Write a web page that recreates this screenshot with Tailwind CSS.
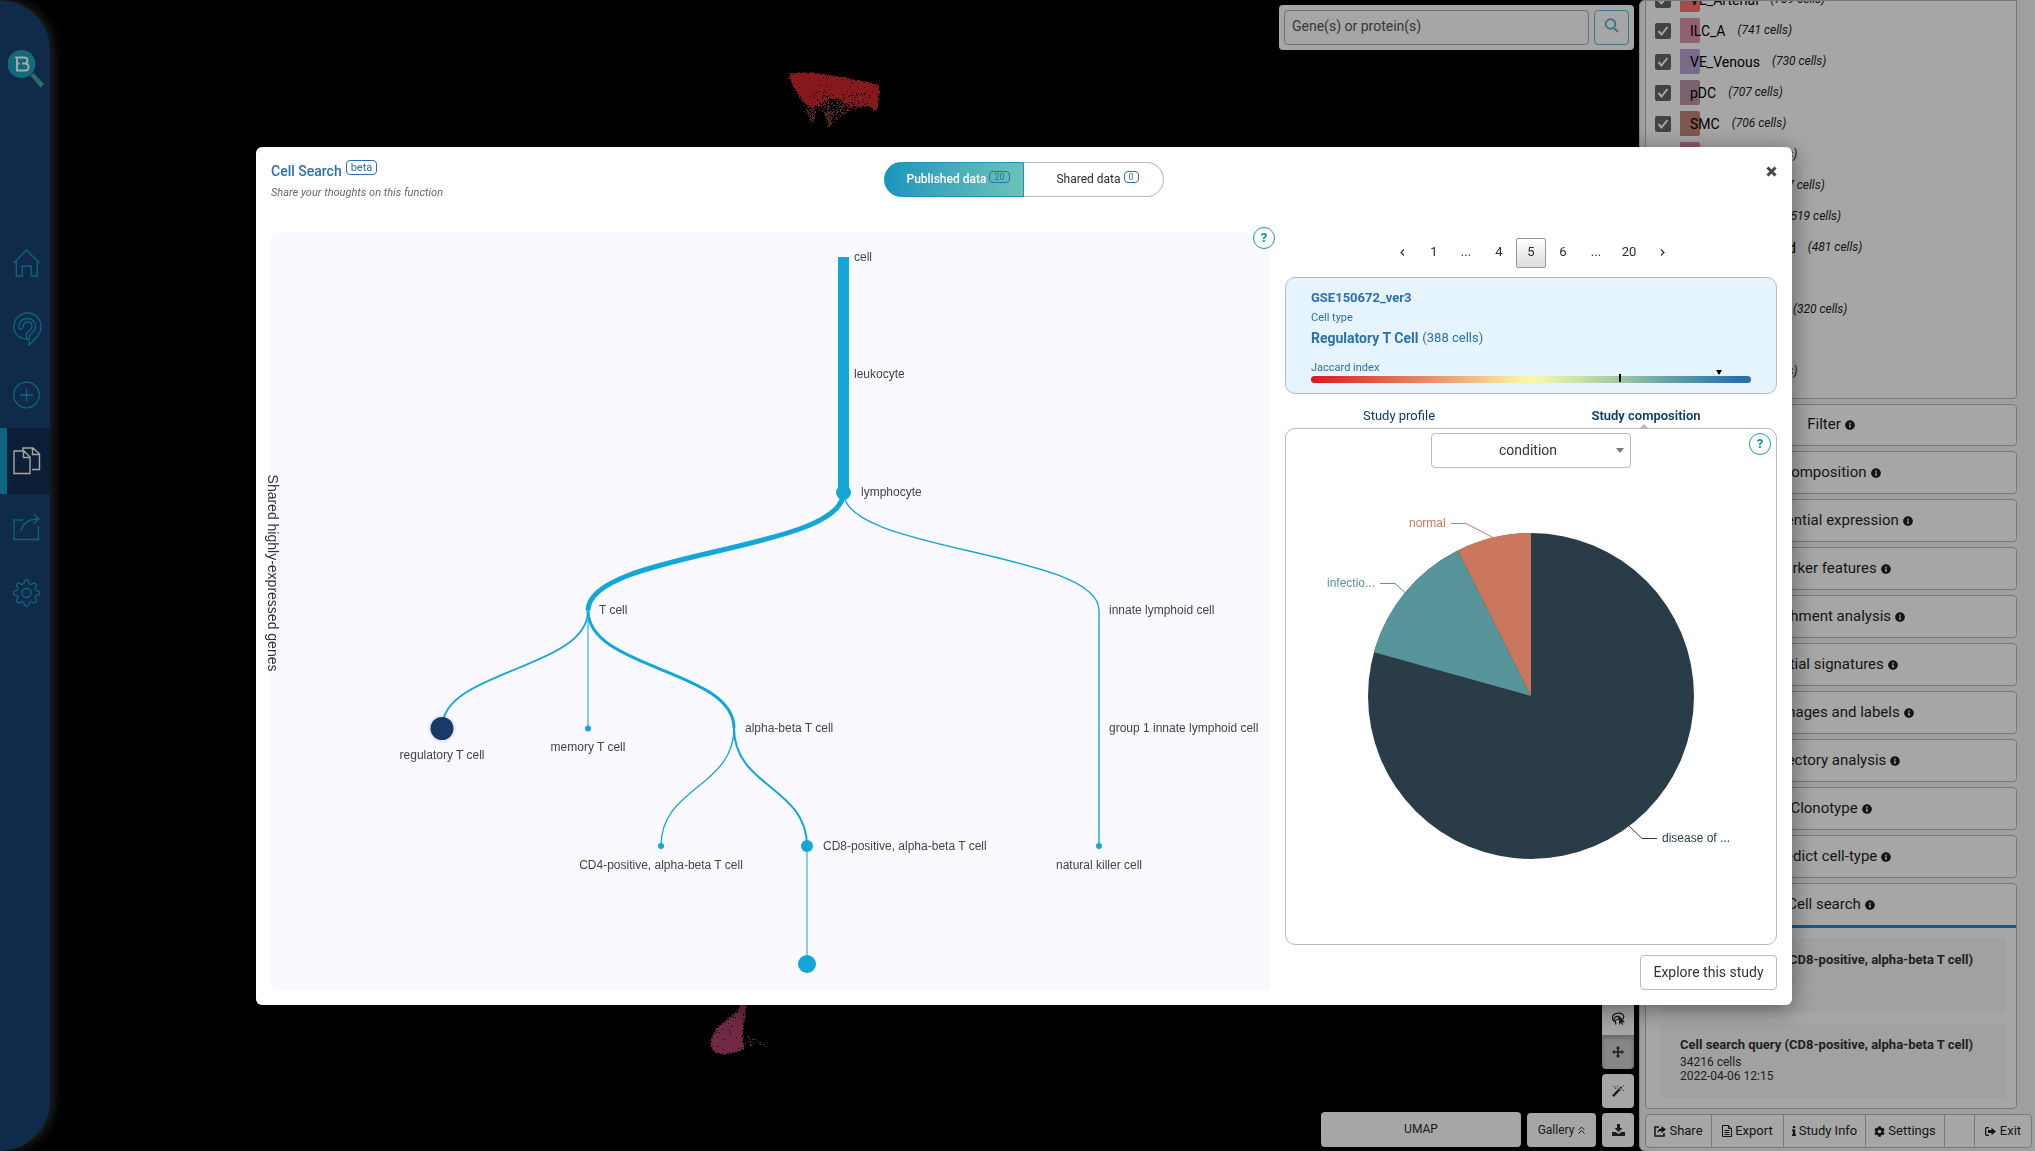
<!DOCTYPE html>
<html lang="en">
<head>
<meta charset="utf-8">
<title>Cell Search</title>
<script src="https://cdn.jsdelivr.net/npm/@tailwindcss/browser@4"></script>
</head>
<body class="h-screen overflow-hidden bg-black font-[Roboto,sans-serif] text-sm text-[#2b2b2b]">

<svg class="hidden">
  <defs>
    <symbol id="info" viewBox="0 0 512 512"><path fill="currentColor" d="M256 8C119.043 8 8 119.083 8 256c0 136.997 111.043 248 248 248s248-111.003 248-248C504 119.083 392.957 8 256 8zm0 110c23.196 0 42 18.804 42 42s-18.804 42-42 42-42-18.804-42-42 18.804-42 42-42zm56 254c0 6.627-5.373 12-12 12h-88c-6.627 0-12-5.373-12-12v-24c0-6.627 5.373-12 12-12h12v-64h-12c-6.627 0-12-5.373-12-12v-24c0-6.627 5.373-12 12-12h64c6.627 0 12 5.373 12 12v100h12c6.627 0 12 5.373 12 12v24z"/></symbol>
    <path id="tooth" d="M-3.6-8.8C-2-9-2.6-10-2.2-11.5Q-1.8-13 0-13Q1.8-13 2.2-11.5C2.6-10 2-9 3.6-8.8"/>
  </defs>
</svg>

<div class="flex h-full">
  <nav class="z-10 flex w-[50px] shrink-0 flex-col rounded-r-[50px] bg-[#1a4170] text-[#149bc4] shadow-[4px_0_12px_rgba(255,255,255,0.2)]">
    <a href="#" aria-label="BioTuring" class="mt-12 block h-[182px] pl-2">
      <svg class="h-10 w-9" viewBox="0 0 36 40" fill="none">
        <path d="M22.500 27.500l3-2.500 10.500 11-3.500 3.500z" fill="#43a8a5"/>
        <circle cx="13.500" cy="16" r="14" fill="#1ba2c1"/>
        <path d="M7 9.500h9.500q3 0 3 3t-3 3H14M9 9v13.500h8q3.500 0 3.500-3.500t-3.500-3.500M8 15.500h3.500" stroke="#fff" stroke-width="2"/>
      </svg>
    </a>
    <a href="#" aria-label="Home" class="flex h-[66px] items-center pl-[13px]">
      <svg class="size-7" viewBox="0 0 28 28" fill="none" stroke="currentColor" stroke-width="1.300"><path d="M.8 14L13.500 1 26.500 14M3.300 12v15h6V17h9v10h6V12"/></svg>
    </a>
    <a href="#" aria-label="Help" class="flex h-[66px] items-center pl-[13px]">
      <svg class="h-[34px] w-[29px]" viewBox="0 0 29 34" fill="none" stroke="currentColor" stroke-width="1.300"><path d="M16 33v-6C7 28 1 22 .8 15 .8 7 7 1 14.500 1 22 1 28 7 28 14.500c0 6-3 10-12 18.500z"/><path d="M6 16c-1-5 3-9.500 8-9.500s8.500 3.500 8.500 8-3 6-5 7.500L16 27h-2.500v-5.500c.5-2.500 5.500-3 5.500-7 0-3-2-4.500-4.500-4.500S10.500 12 10 15c-.5 3-3.500 3-4 1z"/></svg>
    </a>
    <a href="#" aria-label="New" class="flex h-[66px] items-center pl-[13px]">
      <svg class="size-7" viewBox="0 0 28 28" fill="none" stroke="currentColor" stroke-width="1.300"><circle cx="13.500" cy="14" r="12.800"/><path d="M7 14h13M13.500 7.500v13"/></svg>
    </a>
    <a href="#" aria-label="Studies" class="flex h-[66px] items-center border-l-[7px] border-[#149bc4] bg-[#143056] pl-[6px] text-white">
      <svg class="size-7" viewBox="0 0 28 28" fill="none" stroke="currentColor" stroke-width="1.400"><path d="M1 4h10l6 6v16.500H1zM10.500 4v6.500H17M10 4V1h10l6.500 6v15.500H19M19.500 1v6.500H26"/></svg>
    </a>
    <a href="#" aria-label="Share" class="flex h-[66px] items-center pl-[13px]">
      <svg class="size-7" viewBox="0 0 28 28" fill="none" stroke="currentColor" stroke-width="1.300"><path d="M10 7H1v19.500h24.500V13M8 18C10 10 16 6 25.500 6M20.500 1l5.500 5-5.500 5"/></svg>
    </a>
    <a href="#" aria-label="Settings" class="flex h-[66px] items-center pl-[13px]">
      <svg class="size-7" viewBox="-13.500 -14 28 28" fill="none" stroke="currentColor" stroke-width="1.300"><use href="#tooth"/><use href="#tooth" transform="rotate(45)"/><use href="#tooth" transform="rotate(90)"/><use href="#tooth" transform="rotate(135)"/><use href="#tooth" transform="rotate(180)"/><use href="#tooth" transform="rotate(225)"/><use href="#tooth" transform="rotate(270)"/><use href="#tooth" transform="rotate(315)"/><circle r="4.500"/></svg>
    </a>
  </nav>

  <main class="relative flex flex-1 flex-col items-end justify-between bg-black pt-[5px] pr-[5px] pb-1">
    <canvas id="clusterA" width="110" height="75" class="absolute top-[60px] left-[730px]"></canvas>
    <canvas id="clusterB" width="100" height="70" class="absolute bottom-[85px] left-[650px]"></canvas>
    <form class="flex gap-[5px] rounded-sm bg-white p-[5px]">
      <input aria-label="Gene(s) or protein(s)" placeholder="Gene(s) or protein(s)" class="h-[35px] w-[305px] rounded border border-[#aaa] bg-white px-[7px] pb-1 placeholder:text-[#555]">
      <button type="button" aria-label="Search" class="flex h-[35px] w-[35px] items-center justify-center rounded border border-[#5cb5d3] pb-1">
        <svg class="size-[15px]" viewBox="0 0 15 15" fill="none" stroke="#5cb5d3" stroke-width="2"><circle cx="6.500" cy="6" r="4.800"/><path d="M10 10l4 4"/></svg>
      </button>
    </form>
    <div class="flex items-end gap-1.5">
      <button class="h-[35px] w-[200px] rounded-sm bg-white pb-0.5 text-xs">UMAP</button>
      <button class="flex h-[34px] w-[69px] items-center justify-center gap-1 rounded-sm bg-white text-xs">Gallery
        <svg class="h-2 w-[7px]" viewBox="0 0 7 8" fill="none" stroke="currentColor"><path d="M.5 4l3-3 3 3M.5 7.500l3-3 3 3"/></svg>
      </button>
      <div class="flex w-8 flex-col gap-[5px]">
        <div class="flex flex-col">
          <button aria-label="Lasso" class="flex h-[34px] items-center justify-center rounded-t-sm bg-white">
            <svg class="size-[13px]" viewBox="0 0 13 13" fill="none" stroke="currentColor" stroke-width="1.300"><path d="M3 9.500C-.5 8.500 0 4 2 2.500 4.500.5 10 .5 11.500 3.500c.5 1.500 0 3-1 4M2.500 8.500C1.500 6 4 4 6 4.500s1 2.500-.5 3S3 9 3 9.500l1 3"/><path d="M7 3.500v9.500l2-2.500 1 2.500 1.200-.5-1-2.300H13z" fill="currentColor" stroke="none"/></svg>
          </button>
          <button aria-label="Move" class="flex h-[34px] items-center justify-center rounded-b-sm bg-[#d0d0d0] shadow-[inset_0_3px_5px_rgba(0,0,0,0.25)]">
            <svg class="size-3" viewBox="0 0 12 12" fill="currentColor"><path d="M6 0l2.300 2.500H6.800v2.700h2.700V3.700L12 6 9.500 8.300V6.800H6.800v2.700h1.500L6 12 3.700 9.500h1.500V6.800H2.500v1.500L0 6l2.500-2.300v1.500h2.700V2.500H3.700z"/></svg>
          </button>
        </div>
        <button aria-label="Magic wand" class="flex h-[34px] items-center justify-center rounded-sm bg-white">
          <svg class="size-3" viewBox="0 0 12 12" fill="currentColor"><path d="M0 10.500L8.500 1.500 10.500 3 1.800 12zM1.500 1h1v1h-1zM5 .5h1v1H5zM3 2.500h1.300v1.300H3zM10.800 5h1v1h-1zM10.500.5h1v1h-1z"/><path d="M7.200 4.300L8.700 2.700l.8.600L8 5z" fill="#fff"/></svg>
        </button>
        <button aria-label="Download" class="flex h-[34px] items-center justify-center rounded-sm bg-white">
          <svg class="h-3 w-[13px]" viewBox="0 0 13 12" fill="currentColor"><path d="M5 0h3v4h2.500l-4 4-4-4H5zM0 8h3.500l3 2 3-2H13v4H0z"/></svg>
        </button>
      </div>
    </div>
  </main>

  <aside class="flex w-[396px] shrink-0 flex-col rounded-l-md border-l border-[#ccc] bg-[#f5f5f5] pb-[3px] text-[#1f1f1f]">
    <div class="flex min-h-0 flex-1 flex-col gap-[5px] pr-[18px] pl-[5px]">
      <ul id="groups" class="flex h-[399px] shrink-0 flex-col justify-end overflow-hidden rounded-b border border-[#bbb] bg-white pb-[11px] pl-[9px]"></ul>
      <div id="tools" class="flex flex-col gap-[5px]"></div>
      <section class="flex min-h-0 flex-1 flex-col rounded border border-[#bbb] bg-white">
        <button class="flex h-11 shrink-0 items-center justify-center gap-1 border-b-[3px] border-[#0f95bc] text-[15px]">Cell search
          <svg class="size-2.5"><use href="#info"/></svg>
        </button>
        <div class="flex flex-col gap-2.5 pt-2.5 pr-2.5 pl-[14px] text-[#333]">
          <div class="h-[75px] bg-[#f7f7f7] pt-3 pl-5 text-xs leading-[14px]">
            <h3 class="text-[13px] leading-5 font-bold">Cell search query (CD8-positive, alpha-beta T cell)</h3>
            <p>34216 cells</p><p>2022-04-06 12:18</p>
          </div>
          <div class="h-[75px] bg-[#f7f7f7] pt-3 pl-5 text-xs leading-[14px]">
            <h3 class="text-[13px] leading-5 font-bold">Cell search query (CD8-positive, alpha-beta T cell)</h3>
            <p>34216 cells</p><p>2022-04-06 12:15</p>
          </div>
        </div>
      </section>
    </div>
    <div class="mt-[5px] mr-[3px] ml-[5px] flex h-[34px] shrink-0 divide-x divide-[#bbb] rounded border border-[#bbb] bg-white text-[13px]">
      <button class="flex w-[66px] items-center justify-center gap-[3px]"><svg class="size-3" viewBox="0 0 12 12" fill="none" stroke="currentColor" stroke-width="1.500"><path d="M5 2H1v9h9V8"/><path d="M3.500 8C3.500 5 5 3.500 7.500 3.500V1L12 4.500 7.500 8V6C5.500 6 4.500 6.500 3.500 8z" fill="currentColor" stroke="none"/></svg>Share</button>
      <button class="flex w-[72px] items-center justify-center gap-[3px]"><svg class="h-3 w-2.5" viewBox="0 0 10 12" fill="none" stroke="currentColor"><path d="M.5.500h6l3 3v8h-9zM6.500.500v3h3M2.500 5.500h5M2.500 7.500h5M2.500 9.500h5"/></svg>Export</button>
      <button class="flex w-[82px] items-center justify-center gap-[3px]"><svg class="h-2.5 w-1" viewBox="0 0 4 10" fill="currentColor"><path d="M.8 0h2.400v2.200H.8zM0 3.500h3.200v5H4V10H0V8.500h.8V5H0z"/></svg>Study Info</button>
      <button class="flex w-[79px] items-center justify-center gap-[3px]"><svg class="size-[11px]" viewBox="0 0 512 512" fill="currentColor"><path d="M487.400 315.700l-42.600-24.600c4.300-23.200 4.300-47 0-70.200l42.600-24.600c4.900-2.800 7.100-8.600 5.500-14-11.100-35.600-30-67.800-54.700-94.600-3.800-4.100-10-5.100-14.800-2.300L380.800 110c-17.900-15.400-38.500-27.300-60.800-35.100V25.800c0-5.600-3.900-10.500-9.400-11.700-36.700-8.200-74.300-7.800-109.200 0-5.500 1.200-9.400 6.100-9.400 11.700V75c-22.200 7.900-42.800 19.800-60.800 35.100L88.700 85.500c-4.900-2.800-11-1.900-14.800 2.300-24.700 26.700-43.600 58.900-54.700 94.600-1.700 5.400.6 11.200 5.500 14L67.300 221c-4.300 23.200-4.300 47 0 70.200l-42.600 24.600c-4.900 2.800-7.100 8.600-5.500 14 11.100 35.600 30 67.800 54.700 94.600 3.800 4.100 10 5.100 14.800 2.300l42.600-24.600c17.900 15.400 38.500 27.300 60.800 35.100v49.200c0 5.600 3.900 10.500 9.400 11.700 36.700 8.200 74.300 7.800 109.200 0 5.500-1.200 9.400-6.100 9.400-11.700v-49.200c22.200-7.900 42.800-19.800 60.800-35.100l42.600 24.600c4.900 2.800 11 1.900 14.800-2.300 24.700-26.700 43.600-58.900 54.700-94.600 1.500-5.500-.7-11.300-5.600-14.100zM256 336c-44.100 0-80-35.900-80-80s35.900-80 80-80 80 35.900 80 80-35.900 80-80 80z"/></svg>Settings</button>
      <div class="flex-1"></div>
      <button class="flex w-14 items-center justify-center gap-1"><svg class="h-[9px] w-[11px]" viewBox="0 0 11 9" fill="none" stroke="currentColor" stroke-width="1.300"><path d="M4 .7H1.500Q.7.700.7 1.500v6q0 .8.8.8H4"/><path d="M3 3h3.500V.8L11 4.500 6.500 8.200V6H3z" fill="currentColor" stroke="none"/></svg>Exit</button>
    </div>
  </aside>
</div>

<div class="fixed inset-0 z-20 bg-black/35 pt-[147px] pr-[243px] pl-64">
  <div role="dialog" aria-label="Cell Search" class="rounded-md bg-white px-[15px] pb-[15px] shadow-[0_4px_24px_rgba(0,0,0,0.45)]">
    <header class="grid h-[85px] grid-cols-3 items-start">
      <div class="pt-[13px]">
        <h1 class="flex gap-1 text-[#2c6fad]"><span class="pt-px font-medium">Cell Search</span><span class="h-[15px] rounded border border-[#2c6fad] px-1 text-[11px] leading-[13px]">beta</span></h1>
        <a href="#" class="mt-[3px] block text-[11px] leading-[18px] text-[#666] italic">Share your thoughts on this function</a>
      </div>
      <div class="flex justify-center pt-[15px] text-xs">
        <button class="flex h-[35px] w-[140px] justify-center gap-[3px] rounded-l-full border border-[#1695bd] bg-linear-to-r from-[#1695bd] to-[#6cc2b8] pt-2 pl-2 font-medium text-white">Published data<span class="h-3 rounded border border-[#2c6fad] px-1 text-[9px] leading-[11px] font-normal text-[#2c6fad]">20</span></button>
        <button class="flex h-[35px] w-[140px] justify-center gap-[3px] rounded-r-full border border-l-0 border-[#bbb] pt-2 pl-2">Shared data<span class="h-3 rounded border border-[#2c6fad] px-1 text-[9px] leading-[11px] text-[#2c6fad]">0</span></button>
      </div>
      <div class="flex justify-end pt-[19px]">
        <button aria-label="Close" class="size-[11px]"><svg viewBox="0 0 11 11" stroke="#444" stroke-width="3" class="size-[11px]"><path d="M1.500 1.500l8 8M9.500 1.500l-8 8"/></svg></button>
      </div>
    </header>

    <div class="flex gap-[15px]">
      <section class="relative min-w-0 flex-1 rounded-l-lg bg-[#faf9ff]">
        <p class="absolute top-[45%] left-[-8px] -translate-y-1/2 text-sm text-[#333] [writing-mode:vertical-rl] font-['Liberation_Sans',sans-serif]">Shared highly-expressed genes</p>
        <svg class="block w-full" viewBox="271 232 999 758" fill="none" stroke="#12a6d9">
          <path d="M843.500 257v236" stroke-width="11"/>
          <path d="M843.500 492.500C843.500 551.500 588 551.500 588 610.500" stroke-width="5"/>
          <path d="M843.500 492.500C843.500 551.500 1099 551.500 1099 610.500V846" stroke-width="1.400"/>
          <path d="M588 610.500C588 669.500 442 669.500 442 728" stroke-width="1.800"/>
          <path d="M588 610.500V728" stroke="#82cfea" stroke-width="2"/>
          <path d="M588 610.500C588 669.500 734 669.500 734 728" stroke-width="3"/>
          <path d="M734 728C734 787 661 787 661 846" stroke-width="1.300"/>
          <path d="M734 728C734 787 807 787 807 846" stroke-width="2"/>
          <path d="M807 846V964" stroke="#82cfea" stroke-width="2"/>
          <g fill="#12a6d9" stroke="none">
            <circle cx="843.500" cy="492.500" r="7.500"/><circle cx="588" cy="728.500" r="3"/><circle cx="661" cy="846" r="3"/><circle cx="807" cy="846" r="6"/><circle cx="807" cy="964" r="9"/><circle cx="1099" cy="846" r="3"/>
            <circle cx="442" cy="728.500" r="14" fill="#173a66" opacity=".08"/><circle cx="442" cy="728.500" r="11.500" fill="#173a66"/>
          </g>
          <g fill="#444" stroke="none" class="text-xs font-['Liberation_Sans',sans-serif]">
            <text x="854" y="261">cell</text>
            <text x="854" y="378">leukocyte</text>
            <text x="861" y="496">lymphocyte</text>
            <text x="599" y="614">T cell</text>
            <text x="1109" y="614">innate lymphoid cell</text>
            <text x="745" y="732">alpha-beta T cell</text>
            <text x="1109" y="732">group 1 innate lymphoid cell</text>
            <text x="823" y="850">CD8-positive, alpha-beta T cell</text>
            <g text-anchor="middle">
              <text x="442" y="759">regulatory T cell</text>
              <text x="588" y="751">memory T cell</text>
              <text x="661" y="869">CD4-positive, alpha-beta T cell</text>
              <text x="1099" y="869">natural killer cell</text>
            </g>
          </g>
        </svg>
        <button aria-label="Help" class="absolute -top-[5px] -right-[5px] size-[22px] rounded-full border border-[#1499c0] bg-white text-[13px] leading-5 font-black text-[#1499c0]">?</button>
      </section>

      <section class="flex w-[492px] shrink-0 flex-col">
        <nav aria-label="Pages" class="flex h-10 items-center justify-center pt-px pl-0.5 text-[13px]">
          <button aria-label="Previous" class="flex w-8 justify-center"><svg class="h-[7px] w-[5px]" viewBox="0 0 5 7" fill="none" stroke="#333" stroke-width="1.200"><path d="M4 .5l-3 3 3 3"/></svg></button><button class="w-8">1</button><span class="w-8 text-center">...</span><button class="w-[34px]">4</button>
          <button aria-current="page" class="h-[30px] w-[30px] rounded-xs border border-[#979797] bg-linear-to-b from-white to-[#dcdcdc]">5</button>
          <button class="w-[34px]">6</button><span class="w-8 text-center">...</span><button class="w-[34px]">20</button><button aria-label="Next" class="flex w-8 justify-center"><svg class="h-[7px] w-[5px]" viewBox="0 0 5 7" fill="none" stroke="#333" stroke-width="1.200"><path d="M1 .5l3 3-3 3"/></svg></button>
        </nav>
        <article class="mt-[5px] h-[117px] rounded-[10px] border border-[#bbb] bg-[#e6f4ff] px-[25px] pt-2.5 text-[#2c6fad]">
          <h2 class="text-[13px] leading-5 font-bold">GSE150672_ver3</h2>
          <p class="text-[11px] leading-5">Cell type</p>
          <p class="flex gap-1 text-[13px] leading-5"><strong class="text-sm leading-5 font-bold">Regulatory T Cell</strong> (388 cells)</p>
          <p class="mt-3 text-[11px] leading-4">Jaccard index</p>
          <div class="relative h-[7px] rounded-full bg-[linear-gradient(90deg,#d7191c_0%,#f0a878_33%,#fcf3a4_48%,#f3f6ae_52%,#a3c8a4_70%,#6aa6a4_80%,#2870b0_97%)]">
            <span class="absolute -top-[2px] left-[70%] h-2 w-[2px] bg-black"></span>
            <svg class="absolute -top-[6px] left-[92%] h-[5px] w-[6px]" viewBox="0 0 6 5"><path d="M0 0h6L3 5z"/></svg>
          </div>
        </article>
        <div role="tablist" class="grid h-[34px] grid-cols-2 text-[13px] text-[#0d3a66]">
          <button role="tab" class="pt-2.5 pr-[18px]">Study profile</button>
          <button role="tab" aria-selected="true" class="pt-2.5 pr-4 font-semibold">Study composition</button>
        </div>
        <div class="relative flex min-h-0 flex-1 flex-col items-center rounded-[10px] border border-[#bbb] pt-1">
          <svg class="absolute -top-[5px] right-[127px] h-[5px] w-2.5" viewBox="0 0 10 5"><path d="M5 0l5 5H0z" fill="#bbb"/></svg>
          <div class="relative">
            <select aria-label="Grouping" class="h-[35px] w-[200px] appearance-none rounded border border-[#bbb] bg-white pr-1.5 pb-0.5 text-center text-[#333]"><option>condition</option></select>
            <svg class="absolute top-[15px] right-[7px] h-[5px] w-2" viewBox="0 0 8 5"><path d="M0 0h8L4 5z" fill="#777"/></svg>
          </div>
          <button aria-label="Help" class="absolute top-1 right-[5px] size-[22px] rounded-full border border-[#1499c0] bg-white text-[13px] leading-5 font-black text-[#1499c0]">?</button>
          <svg class="mt-8 w-full" viewBox="1286 500 490 390">
            <circle cx="1531" cy="696" r="163" fill="#2b3c49"/>
            <path d="M1531 696L1374 652.300A163 163 0 0 1 1457.700 550.400z" fill="#57959b"/>
            <path d="M1531 696L1457.700 550.400A163 163 0 0 1 1531 533z" fill="#cb775d"/>
            <g fill="none">
              <path d="M1451 523.500h15l27 14" stroke="#cb775d"/><path d="M1380 583.500h15l10 9" stroke="#57959b"/><path d="M1629 826l13 12.500h15" stroke="#2b3c49"/>
            </g>
            <g class="text-xs font-['Liberation_Sans',sans-serif]">
              <text x="1409" y="527" fill="#cb775d">normal</text><text x="1327" y="587" fill="#57959b">infectio...</text><text x="1662" y="842" fill="#2b3c49">disease of ...</text>
            </g>
          </svg>
        </div>
        <button class="mt-2.5 h-[35px] w-[137px] self-end rounded border border-[#bbb] pb-0.5 text-[#333]">Explore this study</button>
      </section>
    </div>
  </div>
</div>

<script>
const groups = [
  ['VE_Arterial', 789, '#ff7272'], ['ILC_A', 741, '#df96ac'], ['VE_Venous', 730, '#bea5d4'], ['pDC', 707, '#be96a8'],
  ['SMC', 706, '#c08778'], ['Goblet', 655, '#e08a98'], ['Monocyte_', 557, '#9fc3d6'], ['Macrophage_', 519, '#c9b28f'],
  ['T_CD4_Activated', 481, '#9dc9a0'], ['VEC', 402, '#d6a5c9'], ['Fibroblast_adv', 320, '#a8b4d9'], ['Mast', 214, '#d9c08f'], ['Basal_', 118, '#b5a5d4']
];
document.getElementById('groups').innerHTML = groups.map(([name, n, color]) => `
  <li class="flex h-[31px] shrink-0 items-center">
    <label class="flex items-center">
      <span class="grid size-4">
        <input type="checkbox" checked class="col-start-1 row-start-1 size-4 appearance-none rounded-xs bg-[#666]">
        <svg class="pointer-events-none col-start-1 row-start-1 size-4" viewBox="0 0 16 16" fill="none" stroke="#fff" stroke-width="2"><path d="M3.500 8l3 3.500 6-7.500"/></svg>
      </span>
      <span class="ml-[9px] h-[25px] w-5 rounded-r-xs" style="background:${color}"></span>
      <span class="-ml-2.5 text-sm text-black">${name}</span>
      <span class="ml-3 pb-0.5 text-xs text-[#222] italic">(${n} cells)</span>
    </label>
  </li>`).join('');

const tools = ['Filter', 'Composition', 'Differential expression', 'Marker features', 'Enrichment analysis', 'Spatial signatures', 'Add images and labels', 'Trajectory analysis', 'Clonotype', 'Predict cell-type'];
document.getElementById('tools').innerHTML = tools.map(t => `
  <button class="flex h-[43px] items-center justify-center gap-1 rounded border border-[#bbb] bg-white text-[15px] first:h-[42px]">${t}
    <svg class="size-2.5"><use href="#info"/></svg>
  </button>`).join('');

// Scatter clusters: random points inside an outline, seeded so that every load looks alike.
let seed = 7;
function rnd() {
  seed = (seed + 0x6D2B79F5) | 0;
  let t = Math.imul(seed ^ (seed >>> 15), 1 | seed);
  t = (t + Math.imul(t ^ (t >>> 7), 61 | t)) ^ t;
  return ((t ^ (t >>> 14)) >>> 0) / 4294967296;
}
function scatter(id, poly, count, colors, jitter) {
  const ctx = document.getElementById(id).getContext('2d');
  const path = new Path2D('M' + poly.map(p => p.join(' ')).join('L') + 'Z');
  for (let i = 0; i < count; i++) {
    const x = rnd() * 110, y = rnd() * 75;
    if (!ctx.isPointInPath(path, x, y)) continue;
    ctx.fillStyle = colors[Math.floor(rnd() * colors.length)];
    ctx.fillRect(Math.round(x + (rnd() - .5) * jitter), Math.round(y + (rnd() - .5) * jitter), 1, 1);
  }
}
scatter('clusterA', [[18,30],[95,38],[88,46],[68,50],[55,60],[48,67],[42,50],[36,48],[33,62],[30,62],[22,42]], 4500, ['#7a3a35', '#8e3a35', '#6b4a40', '#a02028'], 3);
scatter('clusterA', [[30,50],[35,50],[33,62],[31,62]], 4000, ['#5a6a68', '#7a4a45', '#8e3a35'], 2);
scatter('clusterA', [[44,51],[54,52],[49,67]], 8000, ['#7a4038', '#6b4038'], 2);
scatter('clusterA', [[9,14],[30,13],[60,17],[98,25],[97,40],[95,51],[91,45],[66,44],[60,37],[50,36],[42,42],[30,46],[25,42],[14,26]], 34000, ['#d0262e'], 3);
scatter('clusterA', [[30,34],[60,32],[90,34],[85,46],[65,46],[40,46]], 1200, ['#000', '#000', '#6a3a35', '#000', '#a02028'], 4);
scatter('clusterA', [[60,32],[90,34],[85,42],[65,42]], 120, ['#6f9a7a', '#a3a3a3', '#a05050'], 3);
scatter('clusterB', [[40,5],[46,5],[44,16],[41,34],[42,53],[23,57],[15,55],[10,47],[17,32],[27,24],[39,14]], 34000, ['#b0406a'], 3);
scatter('clusterB', [[43,38],[55,42],[67,46],[67,49],[50,49],[43,50]], 900, ['#b0406a', '#9a3a5a'], 4);
scatter('clusterB', [[57,46],[67,47],[67,49],[60,48]], 600, ['#d09a5a'], 1);
</script>
</body>
</html>
